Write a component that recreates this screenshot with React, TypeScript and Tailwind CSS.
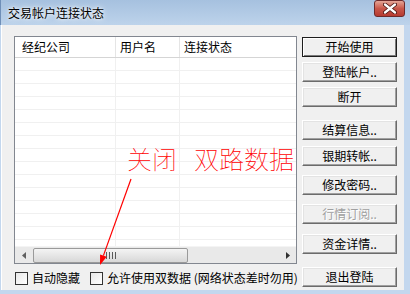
import React from "react";

const font = { fontFamily: '"Noto Sans CJK SC", "Noto Sans", sans-serif' };

function Btn({ label, top, def, disabled }: { label: string; top: number; def?: boolean; disabled?: boolean }) {
  return (
    <div
      style={{ marginTop: top }}
      className={
        "w-[95px] h-[20px] flex items-center justify-center text-[12px] leading-none bg-[#f0f0f0] " +
        (def
          ? "border border-[#1e1e1e] shadow-[inset_1px_1px_0_#ffffff,inset_-1px_-1px_0_#7a7a7a]"
          : "border-t border-l border-t-[#ffffff] border-l-[#ffffff] border-r border-b border-r-[#6b6b6b] border-b-[#6b6b6b] shadow-[inset_-1px_-1px_0_#a0a0a0,inset_1px_1px_0_#e3e3e3]") +
        (disabled ? " text-[#a0a0a0]" : " text-black")
      }
    >
      <span style={disabled ? { textShadow: "1px 1px 0 #ffffff" } : undefined}>{label}</span>
    </div>
  );
}

export default function App() {
  const rows = Array.from({ length: 15 });
  return (
    <div className="relative w-[410px] h-[294px] overflow-hidden bg-[#c3d7ee]" style={font}>
      {/* title bar */}
      <div className="h-[25px] flex items-center pl-[7px] pr-[5px] bg-gradient-to-b from-[#a6c1df] to-[#bdd3eb] border-l border-l-[#6f8fb8]">
        <span className="text-[12px] text-black flex-1" style={{ textShadow: "0 0 6px #ffffff, 0 0 3px #ffffff" }}>
          交易帐户连接状态
        </span>
        <div className="w-[31px] h-[17px] mb-[8px] rounded-[3px] border border-[#6e2a2a] bg-gradient-to-b from-[#e4a597] via-[#c9574a] to-[#b53a30] flex items-center justify-center">
          <svg width="14" height="11" viewBox="0 0 14 11">
            <path d="M2 1.5 L12 9.5 M12 1.5 L2 9.5" stroke="#4a1410" strokeWidth="4" strokeLinecap="round" />
            <path d="M2 1.5 L12 9.5 M12 1.5 L2 9.5" stroke="#ffffff" strokeWidth="2.3" strokeLinecap="round" />
          </svg>
        </div>
      </div>
      {/* body */}
      <div className="ml-[1px] mr-[6px] h-[265px] bg-[#f0f0f0] border-l border-l-[#ffffff] flex pl-[12px] pt-[11px]">
        {/* left column */}
        <div className="flex flex-col w-[283px] shrink-0">
          <div className="h-[228px] border border-[#828790] bg-white flex flex-col">
            {/* header */}
            <div className="h-[21px] flex text-[12px] text-black border-b border-b-[#d5d5d5] bg-white">
              <div className="w-[101px] pl-[7px] flex items-center border-r border-r-[#e5e5e5]">经纪公司</div>
              <div className="w-[64px] pl-[4px] flex items-center border-r border-r-[#e5e5e5]">用户名</div>
              <div className="flex-1 pl-[4px] flex items-center">连接状态</div>
            </div>
            {/* rows */}
            <div className="flex-1 overflow-hidden">
              {rows.map((_, i) => (
                <div key={i} className="h-[13px] flex border-b border-b-[#f0f0f0]">
                  <div className="w-[101px] border-r border-r-[#f0f0f0]" />
                  <div className="w-[64px] border-r border-r-[#f0f0f0]" />
                  <div className="flex-1" />
                </div>
              ))}
            </div>
            {/* scrollbar */}
            <div className="h-[17px] flex items-center bg-[#e9e9e9] border-t border-t-[#f4f4f4]">
              <div className="w-[17px] h-full flex items-center justify-center">
                <svg width="4" height="7" viewBox="0 0 4 7"><path d="M4 0 L0 3.5 L4 7 Z" fill="#606060" /></svg>
              </div>
              <div className="w-[155px] h-[15px] ml-[1px] rounded-[2px] border border-[#9a9a9a] bg-gradient-to-b from-[#f4f4f4] to-[#d8d8d8] flex items-center justify-center gap-[2px]">
                <div className="w-[1px] h-[7px] bg-[#5a5a5a]" />
                <div className="w-[1px] h-[7px] bg-[#5a5a5a]" />
                <div className="w-[1px] h-[7px] bg-[#5a5a5a]" />
                <div className="w-[1px] h-[7px] bg-[#5a5a5a]" />
              </div>
              <div className="flex-1" />
              <div className="w-[17px] h-full flex items-center justify-center">
                <svg width="4" height="7" viewBox="0 0 4 7"><path d="M0 0 L4 3.5 L0 7 Z" fill="#303030" /></svg>
              </div>
            </div>
          </div>
          {/* checkboxes */}
          <div className="flex items-center mt-[7px] text-[12px] text-black h-[14px] whitespace-nowrap">
            <div className="w-[13px] h-[13px] shrink-0 ml-[1px] border border-[#333333] bg-gradient-to-br from-[#e8e8e8] to-[#ffffff]" />
            <span className="ml-[4px] shrink-0">自动隐藏</span>
            <div className="w-[13px] h-[13px] shrink-0 ml-[10px] border border-[#333333] bg-gradient-to-br from-[#e8e8e8] to-[#ffffff]" />
            <span className="ml-[4px] shrink-0">允许使用双数据 (网络状态差时勿用)</span>
          </div>
        </div>
        {/* right column */}
        <div className="flex flex-col ml-[5px]">
          <Btn label="开始使用" top={1} def />
          <Btn label="登陆帐户.." top={5} />
          <Btn label="断开" top={5} />
          <Btn label="结算信息.." top={13} />
          <Btn label="银期转帐.." top={6} />
          <Btn label="修改密码.." top={9} />
          <Btn label="行情订阅.." top={9} disabled />
          <Btn label="资金详情.." top={10} />
          <Btn label="退出登陆" top={13} />
        </div>
      </div>
      {/* annotation */}
      <div className="absolute left-[127px] top-[146px] text-[25px] leading-none text-[#ff0000] font-thin whitespace-nowrap">
        <span>关闭</span>
        <span className="ml-[17px]">双路数据</span>
      </div>
      <svg className="absolute left-0 top-0 pointer-events-none" width="410" height="294">
        <line x1="131" y1="179" x2="103.4" y2="255.6" stroke="#ff0000" strokeWidth="1.2" />
        <polygon points="100,265 106.7,256.8 100.1,254.4" fill="#ff0000" />
      </svg>
    </div>
  );
}
